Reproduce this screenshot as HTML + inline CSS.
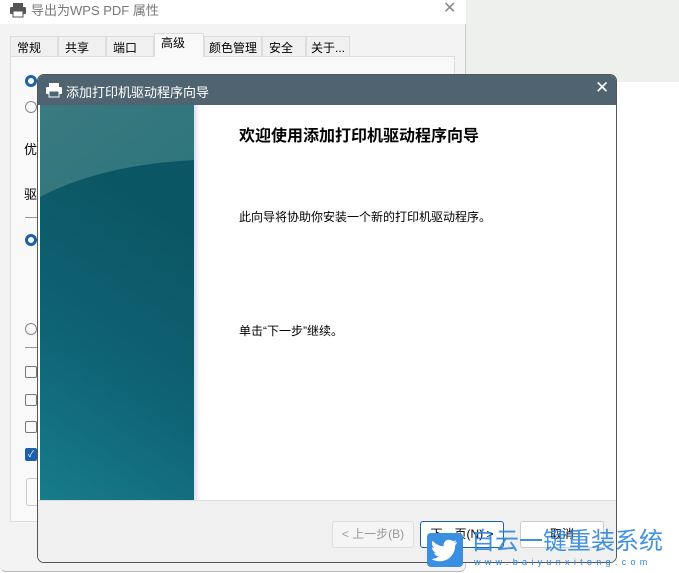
<!DOCTYPE html>
<html><head><meta charset="utf-8"><style>
*{margin:0;padding:0;box-sizing:border-box}
html,body{width:679px;height:573px;overflow:hidden}
body{position:relative;background:#fff;font-family:"Liberation Sans","Noto Sans CJK SC",sans-serif;font-size:12px;color:#000}
.a{position:absolute;white-space:nowrap}
</style></head><body>
<div class="a" style="left:466px;top:0;width:213px;height:82px;background:#eef0ee"></div>
<div class="a" style="left:0;top:0;width:466px;height:572px;background:#f3f3f3;border-right:1px solid #ccc;border-bottom:1px solid #bbb;border-radius:0 0 6px 6px"></div>
<div class="a" style="left:0;top:0;width:466px;height:24px;background:#fff"></div>
<svg class="a" style="left:9px;top:2px" width="18" height="16" viewBox="0 0 18 16"><rect x="4" y="1" width="10" height="4" fill="#555"/><rect x="1" y="5" width="16" height="7" rx="1" fill="#555"/><rect x="4" y="9" width="10" height="6" fill="#fff" stroke="#555"/></svg>
<div class="a" style="left:31px;top:0;color:#777;font-size:13px">导出为WPS PDF 属性</div>
<div class="a" style="left:443px;top:-2px;color:#888;font-size:16px">✕</div>
<div class="a" style="left:10px;top:56px;width:445px;height:466px;background:#f9f9f9;border:1px solid #ddd"></div>
<div class="a" style="left:10px;top:36px;height:21px;display:flex;font-size:12px">
<div style="width:48px;padding:2px 6px;border:1px solid #ddd;background:#f0f0f0">常规</div>
<div style="width:48px;padding:2px 6px;border:1px solid #ddd;background:#f0f0f0">共享</div>
<div style="width:48px;padding:2px 6px;border:1px solid #ddd;background:#f0f0f0">端口</div>
<div style="width:50px;padding:0 6px;border:1px solid #ddd;border-bottom:none;background:#f9f9f9;margin-top:-3px;height:24px">高级</div>
<div style="width:58px;padding:2px 4px;border:1px solid #ddd;background:#f0f0f0">颜色管理</div>
<div style="width:44px;padding:2px 6px;border:1px solid #ddd;background:#f0f0f0">安全</div>
<div style="width:44px;padding:2px 4px;border:1px solid #ddd;background:#f0f0f0;white-space:nowrap">关于...</div>
</div>
<div class="a" style="left:25px;top:75px;width:12px;height:12px;border-radius:50%;border:3px solid #1d5fa8;background:#fff"></div>
<div class="a" style="left:25px;top:101px;width:12px;height:12px;border-radius:50%;border:1px solid #888"></div>
<div class="a" style="left:24px;top:139px;font-size:13px">优</div>
<div class="a" style="left:24px;top:184px;font-size:13px">驱</div>
<div class="a" style="left:25px;top:217px;width:12px;height:1px;background:#999"></div>
<div class="a" style="left:25px;top:234px;width:12px;height:12px;border-radius:50%;border:3px solid #1d5fa8;background:#fff"></div>
<div class="a" style="left:25px;top:323px;width:12px;height:12px;border-radius:50%;border:1px solid #888"></div>
<div class="a" style="left:25px;top:347px;width:12px;height:1px;background:#999"></div>
<div class="a" style="left:25px;top:366px;width:12px;height:12px;border-radius:2px;border:1px solid #777"></div>
<div class="a" style="left:25px;top:394px;width:12px;height:12px;border-radius:2px;border:1px solid #777"></div>
<div class="a" style="left:25px;top:421px;width:12px;height:12px;border-radius:2px;border:1px solid #777"></div>
<div class="a" style="left:25px;top:448px;width:12px;height:13px;border-radius:2px;background:#1d5fa8;color:#fff;font-size:9px;line-height:13px;text-align:center">✓</div>
<div class="a" style="left:26px;top:478px;width:20px;height:28px;border:1px solid #ccc;border-radius:3px;background:#fafafa"></div>
<div class="a" style="left:37px;top:74px;width:580px;height:489px;border:1px solid #555;border-radius:7px;overflow:hidden;background:#fff">
 <div class="a" style="left:0;top:0;width:580px;height:30px;background:#4f6470"></div>
 <svg class="a" style="left:7px;top:7px" width="18" height="16" viewBox="0 0 18 16"><rect x="4" y="1" width="10" height="4" fill="#fff"/><rect x="1" y="5" width="16" height="7" rx="1" fill="#fff"/><rect x="4" y="9" width="10" height="6" fill="#4f6470" stroke="#fff"/></svg>
 <div class="a" style="left:28px;top:7px;color:#fff;font-size:13px">添加打印机驱动程序向导</div>
 <div class="a" style="left:557px;top:3px;color:#fff;font-size:17px">✕</div>
 <svg class="a" style="left:2px;top:30px" width="154" height="395" viewBox="0 0 154 395">
  <defs>
   <linearGradient id="g1" x1="0" y1="0" x2="0.3" y2="1"><stop offset="0" stop-color="#3a7a80"/><stop offset="1" stop-color="#1f6e78"/></linearGradient>
   <linearGradient id="g2" x1="0.3" y1="0" x2="0" y2="1"><stop offset="0" stop-color="#0b5664"/><stop offset="0.5" stop-color="#0e6274"/><stop offset="1" stop-color="#177c8a"/></linearGradient>
  </defs>
  <rect width="154" height="395" fill="url(#g1)"/>
  <path d="M0,92 Q60,60 154,55 L154,395 L0,395 Z" fill="url(#g2)"/>
 </svg>
 <div class="a" style="left:156px;top:30px;width:6px;height:395px;background:linear-gradient(90deg,#dde,#fff)"></div>
 <div class="a" style="left:201px;top:47px;font-size:16px;font-weight:bold">欢迎使用添加打印机驱动程序向导</div>
 <div class="a" style="left:201px;top:133px;font-size:12px">此向导将协助你安装一个新的打印机驱动程序。</div>
 <div class="a" style="left:201px;top:247px;font-size:12px">单击“下一步”继续。</div>
 <div class="a" style="left:0;top:425px;width:580px;height:64px;background:#f0f0f0;border-top:1px solid #ddd"></div>
 <div class="a" style="left:294px;top:446px;width:82px;height:27px;border:1px solid #ddd;border-radius:3px;background:#f5f5f5;color:#999;text-align:center;line-height:25px;font-size:12px">&lt; 上一步(B)</div>
 <div class="a" style="left:382px;top:446px;width:84px;height:27px;border:1px solid #1d5fa8;border-radius:3px;background:#fff;text-align:center;line-height:25px;font-size:12px">下一页(N) &gt;</div>
 <div class="a" style="left:482px;top:446px;width:84px;height:27px;border:1px solid #ccc;border-radius:3px;background:#fff;text-align:center;line-height:25px;font-size:12px">取消</div>
</div>
<div class="a" style="left:427px;top:533px;width:36px;height:34px;background:#3a8fe0;border-radius:4px"></div>
<svg class="a" style="left:431px;top:538px" width="28" height="24" viewBox="0 0 28 24"><path d="M26 4c-1 .5-2 .7-3 .8 1-.6 2-1.6 2.3-2.7-1 .6-2.1 1-3.3 1.3C21 2.3 19.6 1.7 18 1.7c-3 0-5.4 2.4-5.4 5.4 0 .4 0 .8.1 1.2C8.3 8.1 4.3 6 1.7 2.7c-.5.8-.7 1.7-.7 2.7 0 1.9 1 3.5 2.4 4.5-.9 0-1.700-.3-2.400-.7 0 2.600 1.900 4.800 4.300 5.300-.8.2-1.600.3-2.400.1.700 2.100 2.700 3.700 5 3.700C6 20 3.400 21 .5 21 3 22.500 5.700 23.300 8.700 23.300c10 0 15.500-8.300 15.500-15.500V7.100C25 6.300 25.800 5.300 26 4z" fill="#fff"/></svg>
<div class="a" style="left:471px;top:527px;color:#2e86de;font-size:24px;line-height:30px;opacity:.9">自云一键重装系统</div>
<div class="a" style="left:474px;top:557px;color:#2e86de;font-size:9px;line-height:11px;letter-spacing:4.3px">www.baiyunxitong.com</div>
</body></html>
